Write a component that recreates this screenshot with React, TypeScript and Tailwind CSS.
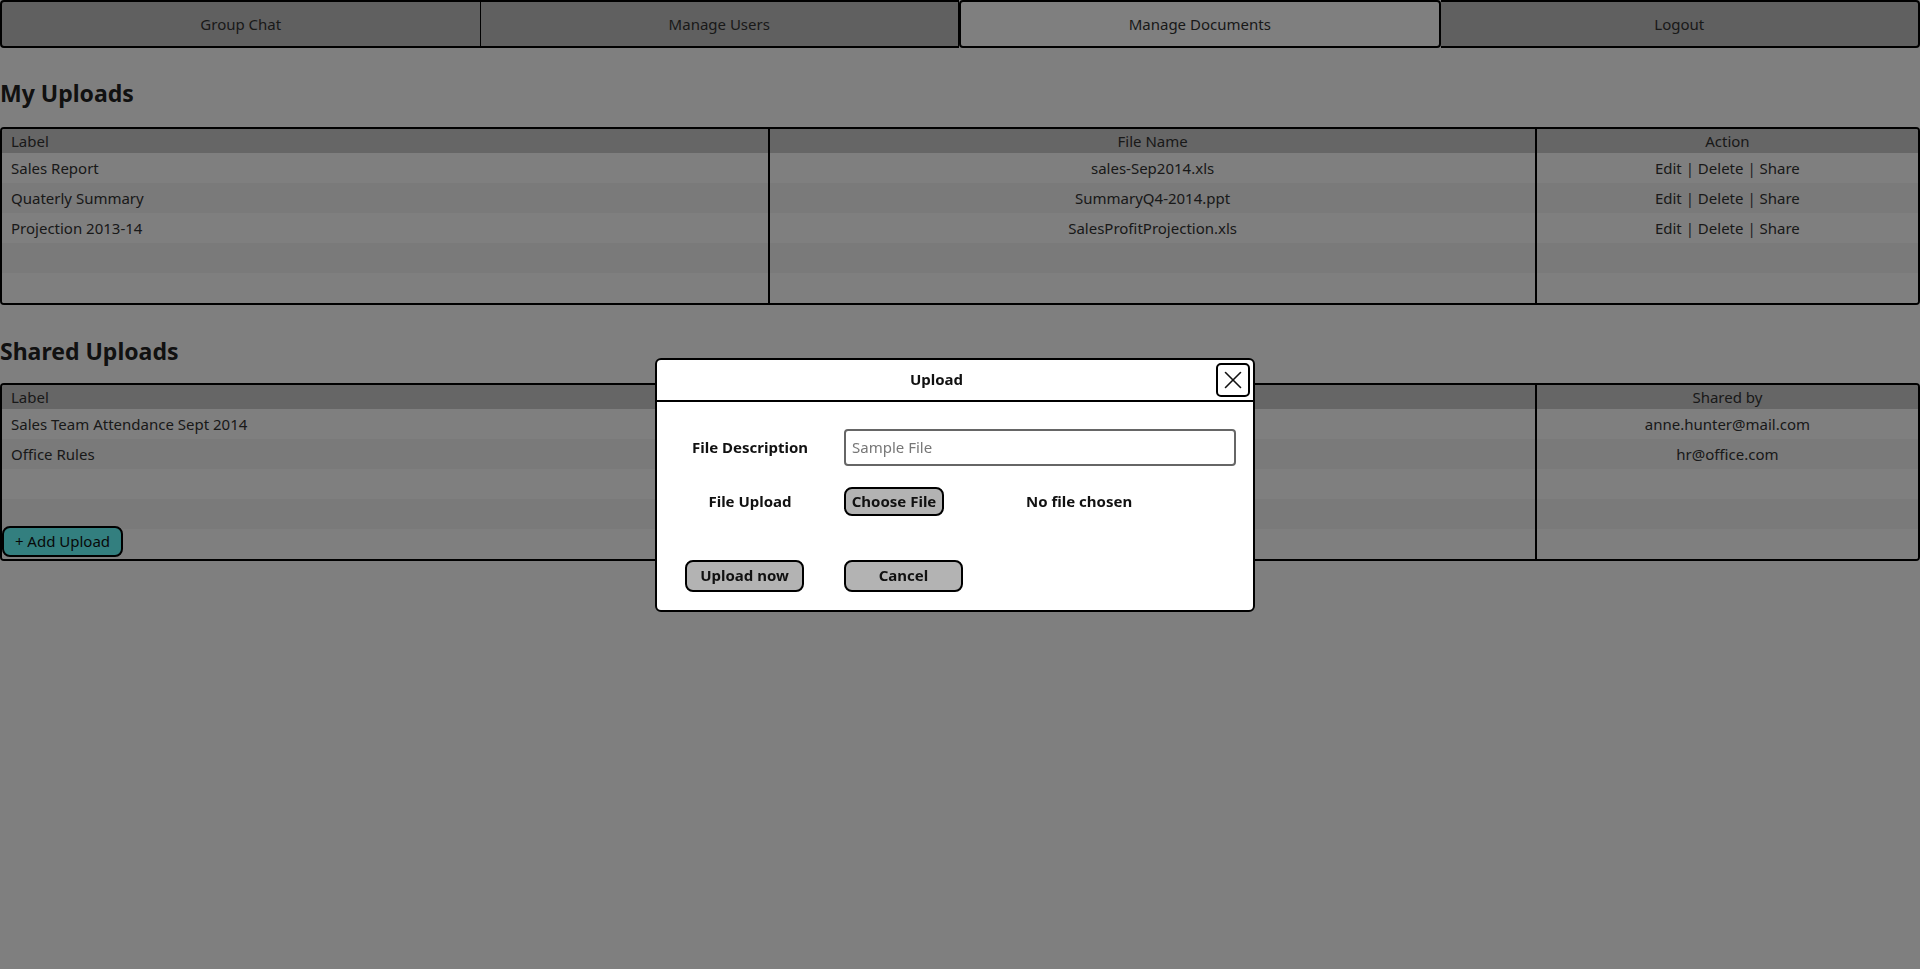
import { X } from "lucide-react";

type row = string[];

const navItems = [
  { title: "Group Chat", active: false },
  { title: "Manage Users", active: false },
  { title: "Manage Documents", active: true },
  { title: "Logout", active: false },
];

const myUploads: row[] = [
  ["Sales Report", "sales-Sep2014.xls", "action"],
  ["Quaterly Summary", "SummaryQ4-2014.ppt", "action"],
  ["Projection 2013-14", "SalesProfitProjection.xls", "action"],
  ["", "", ""],
  ["", "", ""],
];

const sharedUploads: row[] = [
  ["Sales Team Attendance Sept 2014", "Attendance-Sep2014.xls", "anne.hunter@mail.com"],
  ["Office Rules", "OfficeRules.pdf", "hr@office.com"],
  ["", "", ""],
  ["", "", ""],
  ["", "", ""],
];

const Actions = () => (
  <span>
    Edit <span className="text-[#444]">|</span> Delete{" "}
    <span className="text-[#444]">|</span> Share
  </span>
);

type tableProps = {
  headers: string[];
  rows: row[];
  children?: React.ReactNode;
};

const DocTable = ({ headers, rows, children }: tableProps) => {
  return (
    <div className="relative w-full overflow-hidden rounded-[4px] border-2 border-black">
      <div className="grid h-[24px] grid-cols-[2fr_2fr_1fr] bg-[#cccccc]">
        {headers.map((h, i) => (
          <div
            key={h}
            className={
              i === 0
                ? "flex items-center px-[9px]"
                : "flex items-center justify-center border-l-2 border-black"
            }
          >
            {h}
          </div>
        ))}
      </div>
      {rows.map((r, idx) => (
        <div
          key={idx}
          className={`grid h-[30px] grid-cols-[2fr_2fr_1fr] ${
            idx % 2 === 1 ? "bg-[#f4f4f4]" : "bg-white"
          }`}
        >
          <div className="flex items-center px-[9px]">{r[0]}</div>
          <div className="flex items-center justify-center border-l-2 border-black">
            {r[1]}
          </div>
          <div className="flex items-center justify-center border-l-2 border-black">
            {r[2] === "action" ? <Actions /> : r[2]}
          </div>
        </div>
      ))}
      {children}
    </div>
  );
};

const UploadModal = () => {
  return (
    <div className="w-[600px] overflow-hidden rounded-[6px] border-2 border-black bg-white text-[#111]">
      <div className="flex h-[42px] items-center border-b-2 border-black">
        <h3 className="flex-1 text-center font-bold">Upload</h3>
        <button className="mr-[3px] flex h-[34px] w-[34px] items-center justify-center rounded-[5px] border-2 border-black">
          <X className="h-[30px] w-[30px]" strokeWidth={1.3} />
        </button>
      </div>
      <div className="pb-[18px] pl-[18px] pt-[27px]">
        <div className="flex items-center">
          <label className="w-[150px] text-center font-bold">File Description</label>
          <input
            className="ml-[19px] h-[37px] w-[392px] rounded-[4px] border-2 border-[#666] px-[6px] placeholder:text-[#777] outline-none"
            placeholder="Sample File"
          />
        </div>
        <div className="mt-[21px] flex h-[29px] items-center">
          <label className="w-[150px] text-center font-bold">File Upload</label>
          <button className="ml-[19px] h-[29px] w-[100px] rounded-[8px] border-2 border-black bg-[#b3b3b3] font-bold">
            Choose File
          </button>
          <span className="ml-[82px] font-bold">No file chosen</span>
        </div>
        <div className="mt-[44px] flex items-center">
          <button className="ml-[10px] h-[32px] w-[119px] rounded-[8px] border-2 border-black bg-[#b3b3b3] font-bold">
            Upload now
          </button>
          <button className="ml-[40px] h-[32px] w-[119px] rounded-[8px] border-2 border-black bg-[#b3b3b3] font-bold">
            Cancel
          </button>
        </div>
      </div>
    </div>
  );
};

export default function App() {
  return (
    <div className="relative min-h-screen bg-white font-['Noto_Sans',sans-serif] text-[15px] text-[#333]">
      <nav className="flex h-12">
        {navItems.map((n, i) => (
          <button
            key={n.title}
            className={`flex-1 ${
              n.active
                ? "rounded-[4px] border-2 border-black bg-white"
                : `border-y-2 border-black bg-[#c0c0c0] ${
                    i === 0
                      ? "rounded-l-[4px] border-l-2 border-r"
                      : i === navItems.length - 1
                        ? "rounded-r-[4px] border-r-2"
                        : "border-r"
                  }`
            }`}
          >
            {n.title}
          </button>
        ))}
      </nav>

      <h2 className="mb-[18px] mt-[29px] text-[23px] font-bold leading-8 text-[#222]">
        My Uploads
      </h2>
      <DocTable headers={["Label", "File Name", "Action"]} rows={myUploads} />

      <h2 className="mb-[16px] mt-[30px] text-[23px] font-bold leading-8 text-[#222]">
        Shared Uploads
      </h2>
      <DocTable headers={["Label", "File Name", "Shared by"]} rows={sharedUploads}>
        <button className="absolute bottom-[2px] left-0 h-[31px] w-[121px] rounded-[8px] border-2 border-black bg-[#66ffff] text-[#111]">
          + Add Upload
        </button>
      </DocTable>

      <div className="fixed inset-0 flex items-center justify-center bg-black/50 pr-[10px]">
        <UploadModal />
      </div>
    </div>
  );
}
